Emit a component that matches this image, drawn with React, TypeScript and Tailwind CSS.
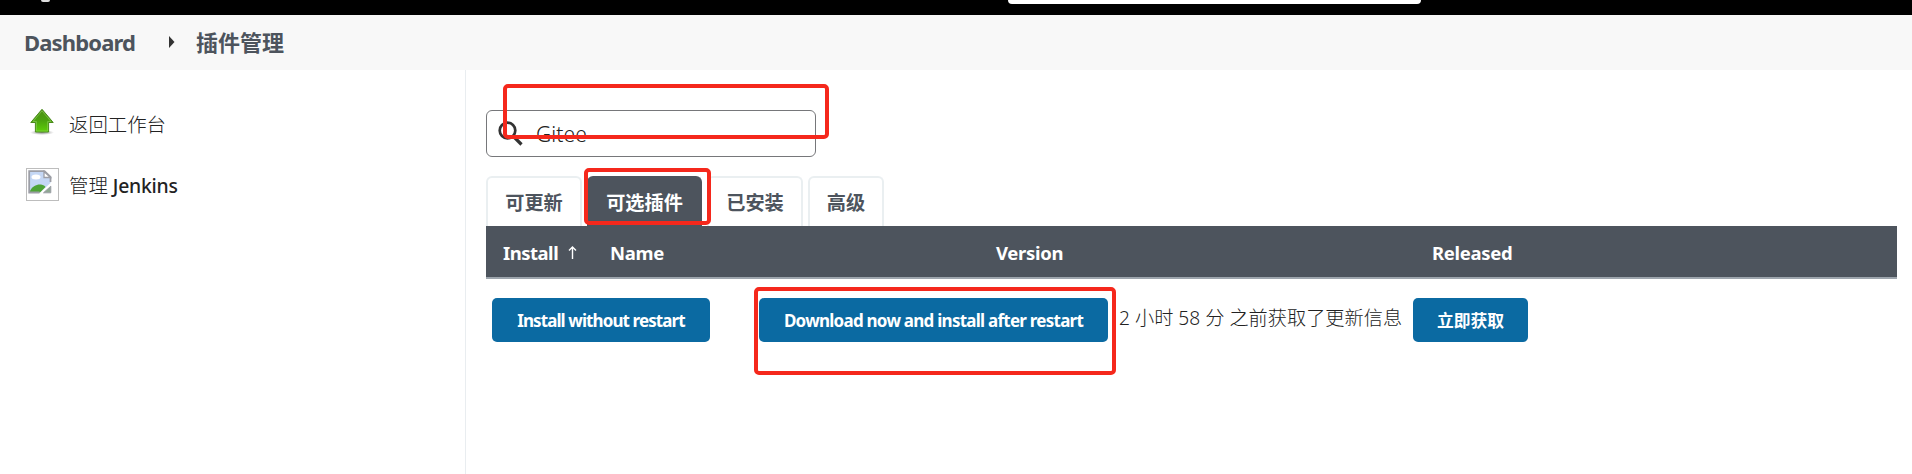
import type { ReactNode } from "react";

function UpArrowIcon() {
  return (
    <svg width="32" height="32" viewBox="0 0 32 32">
      <defs>
        <linearGradient id="leaf" x1="0" y1="0" x2="0" y2="1">
          <stop offset="0" stopColor="#4c8f16" />
          <stop offset="0.5" stopColor="#4ba30e" />
          <stop offset="1" stopColor="#5fd008" />
        </linearGradient>
        <radialGradient id="shade">
          <stop offset="0" stopColor="#000" stopOpacity="0.45" />
          <stop offset="1" stopColor="#000" stopOpacity="0" />
        </radialGradient>
      </defs>
      <ellipse cx="16" cy="26.5" rx="12" ry="2.5" fill="url(#shade)" />
      <path d="M16 3.3 27.2 16.5H22.6V26H9.4V16.5H4.8Z" fill="url(#leaf)" stroke="#4a8a1c" strokeLinejoin="round" />
      <path d="M16 4.9 25 15.5H21.6V25H10.4V15.5H7Z" fill="none" stroke="#8fd05c" strokeOpacity="0.6" />
    </svg>
  );
}

function BrokenImageIcon() {
  return (
    <svg width="24" height="24" viewBox="0 0 24 24">
      <path d="M1 1H17L22.5 6.5V13L12 22.5H1Z" fill="#c4d7f5" />
      <ellipse cx="8" cy="7" rx="4.5" ry="2.5" fill="#fff" />
      <path d="M1.5 22C4 16 9 14 13 14.5C15.5 15 17 16 17.5 17L12 22.5H1.5Z" fill="#4ea436" />
      <path d="M11.5 22.5H1.2V1.2H16.5L22.5 7V12" fill="none" stroke="#9c9ea6" strokeWidth="1.8" />
      <path d="M16 1.5V7.5H22.5Z" fill="#fff" stroke="#9c9ea6" strokeWidth="1.3" />
      <path d="M15.5 22.8 22.8 16.2V22.8Z" fill="#8fa893" stroke="#9c9ea6" />
    </svg>
  );
}

function Tab({ label, width, active }: { label: string; width: string; active?: boolean }) {
  const tone = active
    ? "border-[#4d545d] bg-[#4d545d] text-white"
    : "border-[#eaeff1] bg-white text-[#4d545d]";
  return (
    <div className={`flex h-[50px] justify-center rounded-t-md border-2 border-b-0 pt-[11px] text-[19.2px] leading-7 font-bold ${width} ${tone}`}>
      {label}
    </div>
  );
}

function Button({ children, className }: { children: ReactNode; className: string }) {
  return (
    <button className={`h-11 shrink-0 rounded-[5px] bg-[#0b6aa2] pt-[2px] font-bold whitespace-nowrap text-white ${className}`}>
      {children}
    </button>
  );
}

function Outline({ className }: { className: string }) {
  return <div className={`pointer-events-none absolute rounded-[5px] border-4 border-[#f5281c] ${className}`} />;
}

export default function App() {
  return (
    <div className="relative flex h-[474px] w-[1912px] flex-col overflow-hidden bg-white font-['Noto_Sans','Noto_Sans_CJK_SC',sans-serif] text-[#333]">
      <header className="flex h-[15px] shrink-0 items-start bg-black">
        <div className="ml-[41px] h-[2px] w-[9px] rounded-b-full bg-[#ddd]" />
        <div className="ml-[958px] h-1 w-[413px] rounded-b-[4px] bg-white" />
      </header>

      <nav className="flex h-[55px] shrink-0 items-center bg-[#f8f8f8] pl-[24px] text-[22px] font-bold text-[#4d545d]">
        <span className="w-[145px] tracking-[-0.85px]">Dashboard</span>
        <svg width="6" height="12" viewBox="0 0 6 12" className="mr-[21px] -mt-[2px]">
          <path d="M0 0 5.5 6 0 12Z" fill="#333" />
        </svg>
        <span>插件管理</span>
      </nav>

      <div className="flex flex-1">
        <aside className="w-[466px] shrink-0 border-r border-[#e9edf0] pl-[26px] text-[19.4px] text-[#222]">
          <a className="mt-[36px] flex h-8 items-center gap-[11px]">
            <UpArrowIcon />
            <span className="pt-[6px] font-light">返回工作台</span>
          </a>
          <a className="mt-[30px] flex h-[33px] items-center gap-[10px]">
            <span className="h-[33px] w-[33px] border border-[#bdbdbd] p-px">
              <BrokenImageIcon />
            </span>
            <span className="pt-[2px] font-light">
              管理 <span className="font-medium tracking-[-0.25px]">Jenkins</span>
            </span>
          </a>
        </aside>

        <main className="flex w-[1431px] flex-col pt-10 pl-5">
          <label className="flex h-[47px] w-[330px] items-center rounded-[6px] border border-[#76777a] pl-[11px]">
            <svg width="25" height="25" viewBox="0 0 25 25" fill="none" stroke="#333" strokeWidth="2.7">
              <circle cx="9.5" cy="9.5" r="7.8" />
              <path d="M15.5 15.5 23.5 23.5" strokeWidth="3.2" />
            </svg>
            <span className="ml-[13px] pt-[2px] text-[21px] font-light tracking-[0.1px] text-[#222]">Gitee</span>
          </label>

          <div className="mt-[19px] flex gap-[5px]">
            <Tab label="可更新" width="w-[96px]" />
            <Tab label="可选插件" width="w-[115px]" active />
            <Tab label="已安装" width="w-[96px]" />
            <Tab label="高级" width="w-[76px]" />
          </div>

          <div className="flex h-[53px] items-center border-b-2 border-[#9da5ad] bg-[#4d545d] pt-[2px] pl-[17px] text-[18.5px] font-bold text-white">
            <span className="w-[65px] tracking-[-0.5px]">Install</span>
            <svg width="9" height="13" viewBox="0 0 9 13" fill="none" stroke="#fff" strokeWidth="1.4" className="mr-[33px]">
              <path d="M4.5 13V1M1 4.5 4.5 1 8 4.5" />
            </svg>
            <span className="w-[386px] tracking-[-0.3px]">Name</span>
            <span className="w-[436px] tracking-[-0.3px]">Version</span>
            <span className="tracking-[-0.3px]">Released</span>
          </div>

          <div className="flex pt-[19px] pl-[6px]">
            <Button className="w-[218px] text-[17px] tracking-[-0.9px]">Install without restart</Button>
            <Button className="ml-[49px] w-[349px] text-[17px] tracking-[-0.75px]">
              Download now and install after restart
            </Button>
            <span className="ml-[11px] w-[294px] pt-[6px] text-[19.2px] font-light whitespace-nowrap text-[#222]">
              2 小时 58 分 之前获取了更新信息
            </span>
            <Button className="w-[115px] text-[16.8px]">立即获取</Button>
          </div>
        </main>
      </div>

      <Outline className="top-[84px] left-[503px] h-[55px] w-[326px]" />
      <Outline className="top-[168px] left-[584px] h-[57px] w-[127px]" />
      <Outline className="top-[287px] left-[754px] h-[88px] w-[362px]" />
    </div>
  );
}
